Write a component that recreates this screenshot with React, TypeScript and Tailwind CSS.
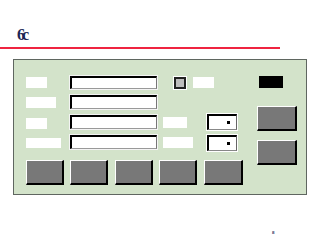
import React from "react";

const Label = ({ w, h = 11 }: { w: number; h?: number }) => (
  <div className="bg-white shrink-0" style={{ width: w, height: h }} />
);

const Input = ({ h = 14 }: { h?: number }) => (
  <div
    className="w-[87px] shrink-0 bg-white border-t-2 border-l-2 border-t-black border-l-black border-r border-b border-r-[#777] border-b-[#999] outline outline-1 outline-[#f4f4f4]"
    style={{ height: h }}
  />
);

const Dropdown = () => (
  <div className="relative w-[30px] h-[16px] shrink-0 bg-white border-t-2 border-l-2 border-t-black border-l-black border-r border-b border-r-[#666] border-b-[#888] outline outline-1 outline-white">
    <div className="absolute right-[6px] top-[5px] w-[3px] h-[3px] bg-black" />
  </div>
);

const Button = ({ className = "" }: { className?: string }) => (
  <div
    className={
      "shrink-0 bg-[#787878] border-t border-l border-t-white border-l-white border-r-2 border-b-2 border-r-black border-b-black " +
      className
    }
  />
);

export default function App() {
  return (
    <div
      className="w-[320px] h-[240px] bg-white relative overflow-hidden"
      style={{ fontFamily: '"Liberation Serif", serif' }}
    >
      <div className="pt-[27px] pl-[17px] h-[43px] flex items-start">
        <span className="text-[16px] leading-[16px] font-bold text-[#1b2756] tracking-[-3px]">6c</span>
      </div>
      <div className="mt-[4px] h-[2px] w-[280px] bg-[#ef2440]" />
      <div className="mt-[10px] ml-[13px] w-[294px] h-[136px] bg-[#d3e3ca] border border-[#5f6660] flex">
        <div className="pl-[12px] pt-[16px] w-[229px] shrink-0">
          <div className="flex items-center h-[13px]">
            <Label w={21} />
            <div className="ml-[23px]">
              <Input h={13} />
            </div>
            <div className="ml-[17px] w-[12px] h-[12px] bg-[#bdbdbd] border-2 border-[#222] outline outline-1 outline-white" />
            <div className="ml-[7px]">
              <Label w={21} />
            </div>
          </div>
          <div className="flex items-center h-[14px] mt-[6px]">
            <Label w={30} />
            <div className="ml-[14px]">
              <Input />
            </div>
          </div>
          <div className="flex items-center h-[14px] mt-[6px]">
            <div className="mt-[3px]">
              <Label w={21} />
            </div>
            <div className="ml-[23px]">
              <Input />
            </div>
            <div className="ml-[6px]">
              <Label w={24} />
            </div>
            <div className="ml-[20px]">
              <Dropdown />
            </div>
          </div>
          <div className="flex items-center h-[14px] mt-[6px]">
            <div className="mt-[2px]">
              <Label w={35} h={10} />
            </div>
            <div className="ml-[9px]">
              <Input />
            </div>
            <div className="ml-[6px]">
              <Label w={30} />
            </div>
            <div className="ml-[14px] mt-[2px]">
              <Dropdown />
            </div>
          </div>
          <div className="flex mt-[11px]">
            <Button className="w-[38px] h-[25px]" />
            <Button className="w-[38px] h-[25px] ml-[6px]" />
            <Button className="w-[38px] h-[25px] ml-[7px]" />
            <Button className="w-[38px] h-[25px] ml-[6px]" />
            <Button className="w-[39px] h-[25px] ml-[7px]" />
          </div>
        </div>
        <div className="ml-[14px] pt-[16px] flex flex-col">
          <div className="ml-[2px] w-[24px] h-[12px] bg-black" />
          <Button className="mt-[18px] w-[40px] h-[25px]" />
          <Button className="mt-[9px] w-[40px] h-[25px]" />
        </div>
      </div>
      <div className="absolute left-[272px] top-[230px] text-[5px] leading-[5px] font-bold text-[#1b2756]">
        8
      </div>
    </div>
  );
}
